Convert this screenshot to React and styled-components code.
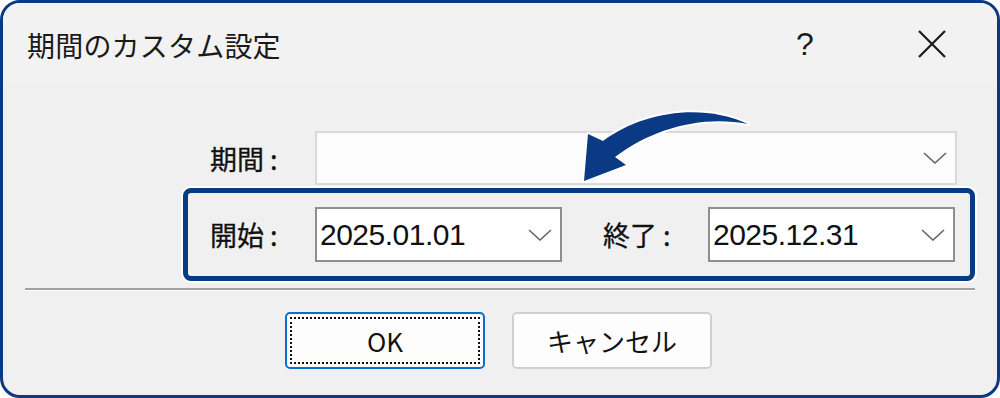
import React from "react"
import styled, { createGlobalStyle } from "styled-components"

const GlobalStyle = createGlobalStyle`
  html, body {
    margin: 0;
    padding: 0;
    background: #ffffff;
  }
  body {
    font-family: "Noto Sans CJK JP", "Noto Sans", sans-serif;
  }
`

const Dialog = styled.div`
  position: relative;
  box-sizing: border-box;
  width: 1000px;
  height: 398px;
  border: 3px solid #0b3a84;
  border-radius: 20px;
  overflow: hidden;
  background: #f0f0f0;
  display: flex;
  flex-direction: column;
  color: #111;
`

const TitleBar = styled.div`
  height: 82px;
  background: #f2f2f2;
  display: flex;
  align-items: center;
  padding: 0 30px 0 24px;
  flex-shrink: 0;
`

const Title = styled.div`
  font-size: 28px;
  line-height: 1;
  letter-spacing: 0.2px;
  color: #1a1a1a;
  margin-top: 2px;
`

const TitleButton = styled.div`
  width: 70px;
  height: 40px;
  display: flex;
  align-items: center;
  justify-content: center;
  margin-left: ${p => p.$first ? "auto" : "57px"};
  font-family: "Liberation Sans", sans-serif;
  font-size: 32px;
  color: #1a1a1a;
`

const Body = styled.div`
  flex: 1;
  display: flex;
  flex-direction: column;
  padding-top: 46px;
`

const PeriodRow = styled.div`
  display: flex;
  align-items: center;
  padding-left: 207px;
`

const Label = styled.div`
  width: 105px;
  flex-shrink: 0;
  font-size: 27px;
  line-height: 1;
  color: #111;
  font-weight: 400;
  -webkit-text-stroke: 0.3px #111;
`

const Combo = styled.div`
  box-sizing: border-box;
  width: ${p => p.$width}px;
  height: ${p => p.$height}px;
  background: ${p => p.$muted ? "#fcfcfc" : "#ffffff"};
  border: 2px solid ${p => p.$muted ? "#dadada" : "#8e8e8e"};
  display: flex;
  align-items: center;
  padding: 0 8px 0 3px;
  font-family: "Liberation Sans", sans-serif;
  font-size: 30px;
  color: #111;
`

const ComboText = styled.span`
  flex: 1;
  letter-spacing: -0.5px;
`

const Chevron = styled.svg`
  width: 24px;
  height: 12px;
  flex-shrink: 0;
`

const Highlight = styled.div`
  box-sizing: border-box;
  margin: 3px 0 0 180px;
  width: 792px;
  height: 93px;
  border: 5px solid #0b3a84;
  border-radius: 8px;
  box-shadow: 0 0 0 2px #ffffff;
  display: flex;
  align-items: center;
  padding: 0 15px 0 22px;
`

const Spacer = styled.div`
  width: 41px;
  flex-shrink: 0;
`

const Separator = styled.div`
  margin: 7px 22px 0 22px;
  border-top: 2px solid #a0a0a0;
  border-bottom: 1px solid #ffffff;
`

const ButtonRow = styled.div`
  display: flex;
  justify-content: center;
  gap: 27px;
  margin-top: 21px;
  padding-right: 3px;
`

const Button = styled.div`
  box-sizing: border-box;
  width: 200px;
  height: 57px;
  border-radius: 5px;
  background: #fdfdfd;
  border: 2px solid ${p => p.$primary ? "#0a6fcc" : "#d0d0d0"};
  outline: ${p => p.$primary ? "2px dotted #111" : "none"};
  outline-offset: -7px;
  display: flex;
  align-items: center;
  justify-content: center;
  font-size: 26px;
  color: #111;
`

const Arrow = styled.svg`
  position: absolute;
  left: 567px;
  top: 92px;
  width: 190px;
  height: 95px;
  overflow: visible;
`

const ChevronIcon = () => (
  <Chevron viewBox="0 0 24 12">
    <path d="M1 1 L12 11 L23 1" fill="none" stroke="#666" strokeWidth="1.6" />
  </Chevron>
)

const CloseIcon = () => (
  <svg width="28" height="28" viewBox="0 0 28 28">
    <path d="M1 1 L27 27 M27 1 L1 27" stroke="#1a1a1a" strokeWidth="2.2" />
  </svg>
)

export default function App() {
  return (
    <>
      <GlobalStyle />
      <Dialog>
        <TitleBar>
          <Title>期間のカスタム設定</Title>
          <TitleButton $first>?</TitleButton>
          <TitleButton><CloseIcon /></TitleButton>
        </TitleBar>
        <Body>
          <PeriodRow>
            <Label>期間 :</Label>
            <Combo $width={642} $height={54} $muted>
              <ComboText></ComboText>
              <ChevronIcon />
            </Combo>
          </PeriodRow>
          <Highlight>
            <Label>開始 :</Label>
            <Combo $width={247} $height={55}>
              <ComboText>2025.01.01</ComboText>
              <ChevronIcon />
            </Combo>
            <Spacer />
            <Label>終了 :</Label>
            <Combo $width={247} $height={55}>
              <ComboText>2025.12.31</ComboText>
              <ChevronIcon />
            </Combo>
          </Highlight>
          <Separator />
          <ButtonRow>
            <Button $primary>OK</Button>
            <Button>キャンセル</Button>
          </ButtonRow>
        </Body>
        <Arrow viewBox="0 0 190 95">
          <path
            d="M178 29 C133 8, 73 16, 33 46 L18 39 L14 86 L56 70 L45 62 C83 33, 133 20, 178 29 Z"
            fill="#0b3a84"
            stroke="#ffffff"
            strokeWidth="4"
            strokeLinejoin="round"
            paintOrder="stroke"
          />
        </Arrow>
      </Dialog>
    </>
  )
}
